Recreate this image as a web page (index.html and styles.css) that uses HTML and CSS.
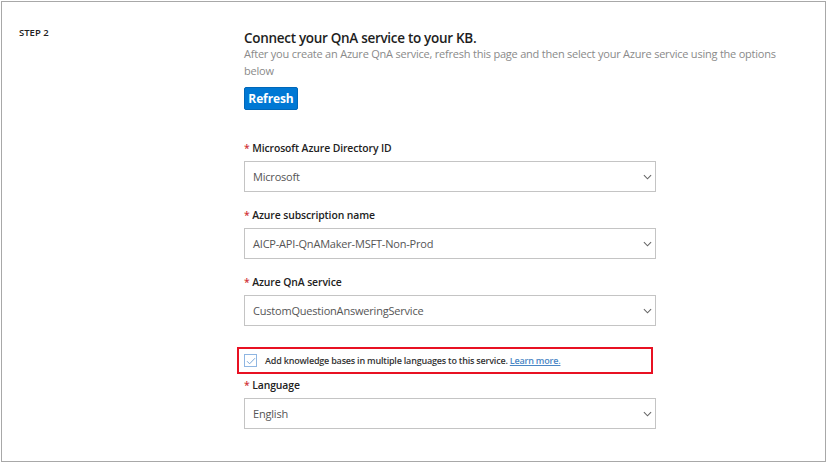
FILE: index.html
```html
<!DOCTYPE html>
<html>
<head>
<meta charset="utf-8">
<link rel="stylesheet" href="styles.css">
</head>
<body>
<div class="panel">
  <div class="step">STEP 2</div>
  <div class="content">
    <h2 class="title">Connect your QnA service to your KB.</h2>
    <p class="desc">After you create an Azure QnA service, refresh this page and then select your Azure service using the options below</p>
    <button class="btn">Refresh</button>

    <div class="field first">
      <div class="label"><span class="req">*</span> Microsoft Azure Directory ID</div>
      <div class="select"><span>Microsoft</span><svg class="chev" width="10" height="6" viewBox="0 0 10 6"><path d="M1 1l4 4 4-4" fill="none" stroke="#666" stroke-width="1.2"/></svg></div>
    </div>
    <div class="field">
      <div class="label"><span class="req">*</span> Azure subscription name</div>
      <div class="select"><span>AICP-API-QnAMaker-MSFT-Non-Prod</span><svg class="chev" width="10" height="6" viewBox="0 0 10 6"><path d="M1 1l4 4 4-4" fill="none" stroke="#666" stroke-width="1.2"/></svg></div>
    </div>
    <div class="field">
      <div class="label"><span class="req">*</span> Azure QnA service</div>
      <div class="select"><span>CustomQuestionAnsweringService</span><svg class="chev" width="10" height="6" viewBox="0 0 10 6"><path d="M1 1l4 4 4-4" fill="none" stroke="#666" stroke-width="1.2"/></svg></div>
    </div>

    <div class="highlight">
      <span class="check"><svg width="10" height="8" viewBox="0 0 10 8"><path d="M1 4.2l2.6 2.6L9 1.2" fill="none" stroke="#7aa7d8" stroke-width="1"/></svg></span>
      <span class="check-text">Add knowledge bases in multiple languages to this service. <a class="link" href="#">Learn more.</a></span>
    </div>

    <div class="field lang">
      <div class="label"><span class="req">*</span> Language</div>
      <div class="select"><span>English</span><svg class="chev" width="10" height="6" viewBox="0 0 10 6"><path d="M1 1l4 4 4-4" fill="none" stroke="#666" stroke-width="1.2"/></svg></div>
    </div>
  </div>
</div>
</body>
</html>
```
FILE: styles.css
```css
* { box-sizing: border-box; }
html, body { margin: 0; padding: 0; background: #fff; }
body { font-family: "Open Sans", "Noto Sans", sans-serif; color: #222; }

.panel {
  margin: 1px 0 0 1px;
  width: 825px;
  height: 461px;
  border: 1px solid #a8a8a8;
  display: flex;
}
.step {
  width: 242px;
  padding: 24px 0 0 17px;
  font-size: 9.5px;
  font-weight: 600;
  color: #222;
}
.content {
  width: 412px;
  padding-top: 29px;
}
.title {
  margin: 0;
  font-size: 13.5px;
  letter-spacing: -0.3px;
  line-height: 14px;
  font-weight: 600;
  color: #1e1e1e;
  white-space: nowrap;
}
.desc {
  margin: 0;
  width: 540px;
  font-size: 11px;
  letter-spacing: -0.22px;
  line-height: 17px;
  color: #8a8a8a;
}
.btn {
  display: block;
  margin-top: 8px;
  width: 54px;
  height: 23px;
  padding: 0;
  border: 1px solid #0067b8;
  border-radius: 2px;
  background: #0078d4;
  color: #fff;
  font-family: inherit;
  font-size: 12px;
  letter-spacing: -0.1px;
  font-weight: 700;
}
.field { margin-top: 17px; }
.field.first { margin-top: 32px; }
.field.lang { margin-top: 5px; }
.label {
  font-size: 10.4px;
  font-weight: 600;
  letter-spacing: -0.1px;
  line-height: 13px;
  color: #222;
  margin-bottom: 6px;
}
.req { color: #d13438; }
.select {
  height: 31px;
  border: 1px solid #c4c4c4;
  display: flex;
  align-items: center;
  justify-content: space-between;
  padding: 0 3px 0 8px;
  font-size: 11px;
  letter-spacing: -0.2px;
  color: #555;
}
.chev { display: block; width: 9px; height: 6px; }
.highlight {
  margin: 21px 0 0 -7px;
  width: 416px;
  height: 27px;
  border: 2px solid #e81123;
  display: flex;
  align-items: center;
  padding-left: 5px;
}
.check {
  width: 13px;
  height: 13px;
  border: 1px solid #8fb6e2;
  display: flex;
  align-items: center;
  justify-content: center;
  margin-right: 8px;
}
.check-text {
  font-size: 9px;
  font-weight: 600;
  letter-spacing: -0.2px;
  color: #333;
  white-space: nowrap;
}
.link { color: #4a86c5; text-decoration: underline; }
```
